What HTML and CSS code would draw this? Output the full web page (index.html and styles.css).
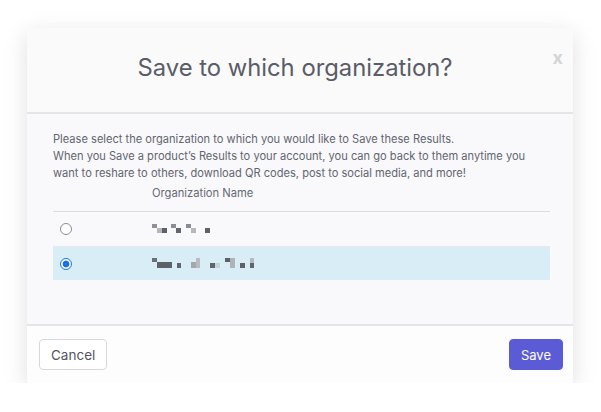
FILE: index.html
```html
<!DOCTYPE html>
<html>
<head>
<meta charset="utf-8">
<link rel="stylesheet" href="styles.css">
</head>
<body>
<div class="modal">
  <div class="modal-header">
    <h1 class="title">Save to which organization?</h1>
    <span class="close">x</span>
  </div>
  <div class="modal-body">
    <p class="intro">Please select the organization to which you would like to Save these Results.<br>When you Save a product’s Results to your account, you can go back to them anytime you want to reshare to others, download QR codes, post to social media, and more!</p>
    <table class="orgs">
      <thead>
        <tr><th class="c-radio"></th><th class="c-name">Organization Name</th></tr>
      </thead>
      <tbody>
        <tr>
          <td class="c-radio"><span class="radio"></span></td>
          <td class="c-name">
            <svg class="blur" width="60" height="10" viewBox="0 0 60 10">
              <rect x="0" y="0" width="5" height="4" fill="#8f9198"/>
              <rect x="5" y="4" width="5" height="5" fill="#b4b6bc"/>
              <rect x="10" y="4" width="5" height="5" fill="#5f6169"/>
              <rect x="19" y="0" width="5" height="4" fill="#8c8e95"/>
              <rect x="24" y="4" width="5" height="5" fill="#63656d"/>
              <rect x="34" y="0" width="5" height="4" fill="#8a8c93"/>
              <rect x="39" y="4" width="5" height="5" fill="#b6b8be"/>
              <rect x="53" y="4" width="5" height="5" fill="#5f6169"/>
            </svg>
          </td>
        </tr>
        <tr class="selected">
          <td class="c-radio"><span class="radio checked"></span></td>
          <td class="c-name">
            <svg class="blur" width="105" height="11" viewBox="0 0 105 11">
              <rect x="0" y="0" width="5" height="4" fill="#6c6e76"/>
              <rect x="5" y="4" width="15" height="6" fill="#5f6169"/>
              <rect x="25" y="5" width="4" height="5" fill="#63656d"/>
              <rect x="39" y="4" width="5" height="6" fill="#a3a7ae"/>
              <rect x="44" y="0" width="4" height="10" fill="#b7bbc2"/>
              <rect x="58" y="5" width="5" height="5" fill="#62646c"/>
              <rect x="63" y="5" width="5" height="5" fill="#c6d2da"/>
              <rect x="73" y="0" width="5" height="4" fill="#5e6068"/>
              <rect x="78" y="0" width="5" height="10" fill="#aeb3ba"/>
              <rect x="88" y="5" width="5" height="5" fill="#5f6169"/>
              <rect x="98" y="0" width="4" height="5" fill="#b5bac1"/>
              <rect x="98" y="5" width="4" height="5" fill="#62646c"/>
            </svg>
          </td>
        </tr>
      </tbody>
    </table>
  </div>
  <div class="modal-footer">
    <button class="btn btn-cancel">Cancel</button>
    <button class="btn btn-save">Save</button>
  </div>
</div>
</body>
</html>
```
FILE: styles.css
```css
* { box-sizing: border-box; }
html, body { margin: 0; padding: 0; background: #ffffff; }
body {
  font-family: Inter, "Noto Sans", sans-serif;
  color: #5b5e69;
  padding: 28px 28px 0 27px;
}
.modal {
  width: 546px;
  height: 355px;
  display: flex;
  flex-direction: column;
  background: #f9f9fb;
  box-shadow: 0 6px 22px rgba(0,0,0,0.13);
}
.modal-header {
  position: relative;
  height: 86px;
  background: #fafafb;
  border-bottom: 2px solid #e4e5e8;
  display: flex;
  align-items: center;
  justify-content: center;
  padding-right: 10px;
}
.title {
  margin: 0 0 5px 0;
  font-weight: 400;
  font-size: 23.8px;
  color: #5a5d68;
}
.close {
  position: absolute;
  right: 10px;
  top: 19px;
  font-size: 18px;
  font-weight: 700;
  color: #d3d4d8;
}
.modal-body {
  flex: 1;
  padding: 17px 23px 0 26px;
  border-bottom: 2px solid #e4e5e8;
}
.intro {
  margin: 0 0 5px 0;
  font-size: 11.1px;
  line-height: 16.8px;
  color: #62656f;
}
.orgs {
  width: 100%;
  border-collapse: collapse;
  font-size: 11.2px;
}
.orgs th {
  font-weight: 400;
  text-align: left;
  color: #666a73;
  height: 25px;
  vertical-align: top;
  padding: 0;
  border-bottom: 1px solid #dcdde1;
}
.orgs td {
  height: 35px;
  padding: 0;
  border-bottom: 1px solid #e8e9ec;
  vertical-align: middle;
}
.orgs tr.selected td { background: #d9edf7; border-bottom: none; height: 34px; }
.c-radio { width: 99px; }
.c-radio .radio {
  display: block;
  margin-left: 7px;
  width: 12px;
  height: 12px;
  border-radius: 50%;
  border: 1px solid #8b8d93;
  background: #fff;
}
.c-radio .radio.checked {
  border: 1.5px solid #1a73e8;
  background: radial-gradient(circle, #1a73e8 0 3.2px, #fff 3.7px);
}
.blur { display: block; }
.modal-footer {
  flex: 0 0 57px;
  background: #fdfdfd;
  display: flex;
  align-items: center;
  justify-content: space-between;
  padding: 0 10px 0 12px;
}
.btn {
  font-family: Inter, "Noto Sans", sans-serif;
  font-size: 13.5px;
  height: 31px;
  border-radius: 4px;
  padding: 0 11px;
  cursor: pointer;
}
.btn-cancel {
  background: #ffffff;
  color: #52555f;
  border: 1px solid #d7d8dd;
}
.btn-save {
  background: #5b5bd6;
  color: #ffffff;
  border: 1px solid #5b5bd6;
  font-size: 13px;
  padding: 0 11px;
}
```
